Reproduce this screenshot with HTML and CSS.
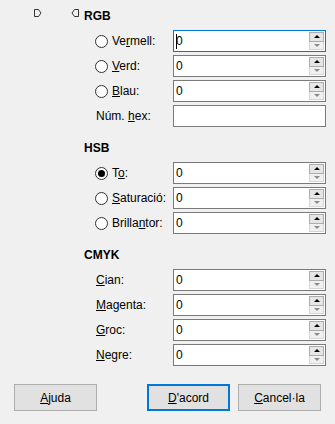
FILE: index.html
```html
<!DOCTYPE html>
<html>
<head>
  <meta charset="UTF-8">
  <title>Tria un color</title>
  <meta name="viewport" content="width=device-width, initial-scale=1.0">
  <link rel="stylesheet" href="styles.css">
</head>
<body>
  <div class="dialog">
    <div class="head first">
      <svg class="mark" width="8" height="8" viewBox="0 0 8 8"><path d="M0.5 0.5H4.5L7 4L4.5 7.5H0.5Z"/></svg>
      <svg class="mark right" width="8" height="8" viewBox="0 0 8 8"><path d="M7.5 0.5H3.5L1 4L3.5 7.5H7.5Z"/></svg>
      <h2>RGB</h2>
    </div>
    <div class="grid">
      <label class="lbl"><span class="radio"></span><span>Ve<u>r</u>mell:</span></label>
      <div class="field focus"><span class="val"><i class="caret"></i>0</span><span class="spin"><b class="up"></b><b class="down"></b></span></div>
      <label class="lbl"><span class="radio"></span><span><u>V</u>erd:</span></label>
      <div class="field"><span class="val">0</span><span class="spin"><b class="up"></b><b class="down"></b></span></div>
      <label class="lbl"><span class="radio"></span><span><u>B</u>lau:</span></label>
      <div class="field"><span class="val">0</span><span class="spin"><b class="up"></b><b class="down"></b></span></div>
      <label class="lbl plain"><span>Núm. <u>h</u>ex:</span></label>
      <div class="field"><span class="val"></span></div>
    </div>

    <div class="head"><h2>HSB</h2></div>
    <div class="grid">
      <label class="lbl"><span class="radio on"></span><span>T<u>o</u>:</span></label>
      <div class="field"><span class="val">0</span><span class="spin"><b class="up"></b><b class="down"></b></span></div>
      <label class="lbl"><span class="radio"></span><span><u>S</u>aturació:</span></label>
      <div class="field"><span class="val">0</span><span class="spin"><b class="up"></b><b class="down"></b></span></div>
      <label class="lbl"><span class="radio"></span><span>Brilla<u>n</u>tor:</span></label>
      <div class="field"><span class="val">0</span><span class="spin"><b class="up"></b><b class="down"></b></span></div>
    </div>

    <div class="head"><h2>CMYK</h2></div>
    <div class="grid">
      <label class="lbl plain"><span><u>C</u>ian:</span></label>
      <div class="field"><span class="val">0</span><span class="spin"><b class="up"></b><b class="down"></b></span></div>
      <label class="lbl plain"><span><u>M</u>agenta:</span></label>
      <div class="field"><span class="val">0</span><span class="spin"><b class="up"></b><b class="down"></b></span></div>
      <label class="lbl plain"><span><u>G</u>roc:</span></label>
      <div class="field"><span class="val">0</span><span class="spin"><b class="up"></b><b class="down"></b></span></div>
      <label class="lbl plain"><span><u>N</u>egre:</span></label>
      <div class="field"><span class="val">0</span><span class="spin"><b class="up"></b><b class="down"></b></span></div>
    </div>

    <div class="buttons">
      <button class="btn"><u>A</u>juda</button>
      <div class="group">
        <button class="btn default"><u>D</u>'acord</button>
        <button class="btn"><u>C</u>ancel·la</button>
      </div>
    </div>
  </div>
</body>
</html>
```

FILE: styles.css
```css
html, body { margin: 0; background: #f0f0f0; }
body { font-family: "Liberation Sans", Arial, sans-serif; font-size: 12px; color: #000; }
.dialog { width: 335px; height: 424px; padding-top: 8px; box-sizing: border-box; }

.head { display: flex; align-items: flex-start; height: 16px; margin-top: 13px; padding-left: 84px; }
.head.first { margin-top: 0; padding-left: 34px; }
.head h2 { margin: 0; font-size: 12px; font-weight: bold; line-height: 16px; }
.mark { display: block; margin-top: 1px; fill: none; stroke: #333; stroke-width: 1; }
.mark.right { margin-left: 29px; margin-right: 5px; }

.grid {
  display: grid; grid-template-columns: 78px 153px; grid-auto-rows: 22px;
  row-gap: 3px; margin-top: 6px; padding-left: 95px;
}
.lbl { display: flex; align-items: center; white-space: nowrap; }
.lbl.plain { padding-left: 1px; }
.radio {
  width: 11px; height: 11px; border: 1px solid #333; border-radius: 50%;
  background: #fff; margin-right: 4px; position: relative; flex: none;
}
.radio.on::after {
  content: ""; position: absolute; left: 2px; top: 2px;
  width: 7px; height: 7px; border-radius: 50%; background: #000;
}

.field {
  display: flex; border: 1px solid #7a7a7a; background: #fff; box-sizing: border-box;
}
.field.focus { border-color: #0078d7; }
.val { flex: 1; padding-left: 2px; line-height: 20px; position: relative; }
.caret { position: absolute; left: 2px; top: 3px; width: 1px; height: 15px; background: #000; }
.spin { width: 15px; margin: 1px 1px 1px 0; display: flex; flex-direction: column; }
.spin b { flex: 1; box-sizing: border-box; display: flex; align-items: center; justify-content: center; }
.spin .up { background: #e5e5e5; border: 1px solid #adadad; }
.spin .down { background: #f0f0f0; border: 1px solid #d6d6d6; border-top: none; }
.spin .up::after {
  content: ""; border-left: 3px solid transparent; border-right: 3px solid transparent;
  border-bottom: 3px solid #000;
}
.spin .down::after {
  content: ""; border-left: 3px solid transparent; border-right: 3px solid transparent;
  border-top: 3px solid #8a8a8a;
}

.buttons { display: flex; justify-content: space-between; padding: 0 14px; margin-top: 18px; }
.group { display: flex; gap: 8px; }
.btn {
  width: 83px; height: 27px; padding: 0; background: #e1e1e1; border: 1px solid #adadad;
  font: inherit; color: #000; box-sizing: border-box;
}
.btn.default { border: 2px solid #0078d7; }
```
